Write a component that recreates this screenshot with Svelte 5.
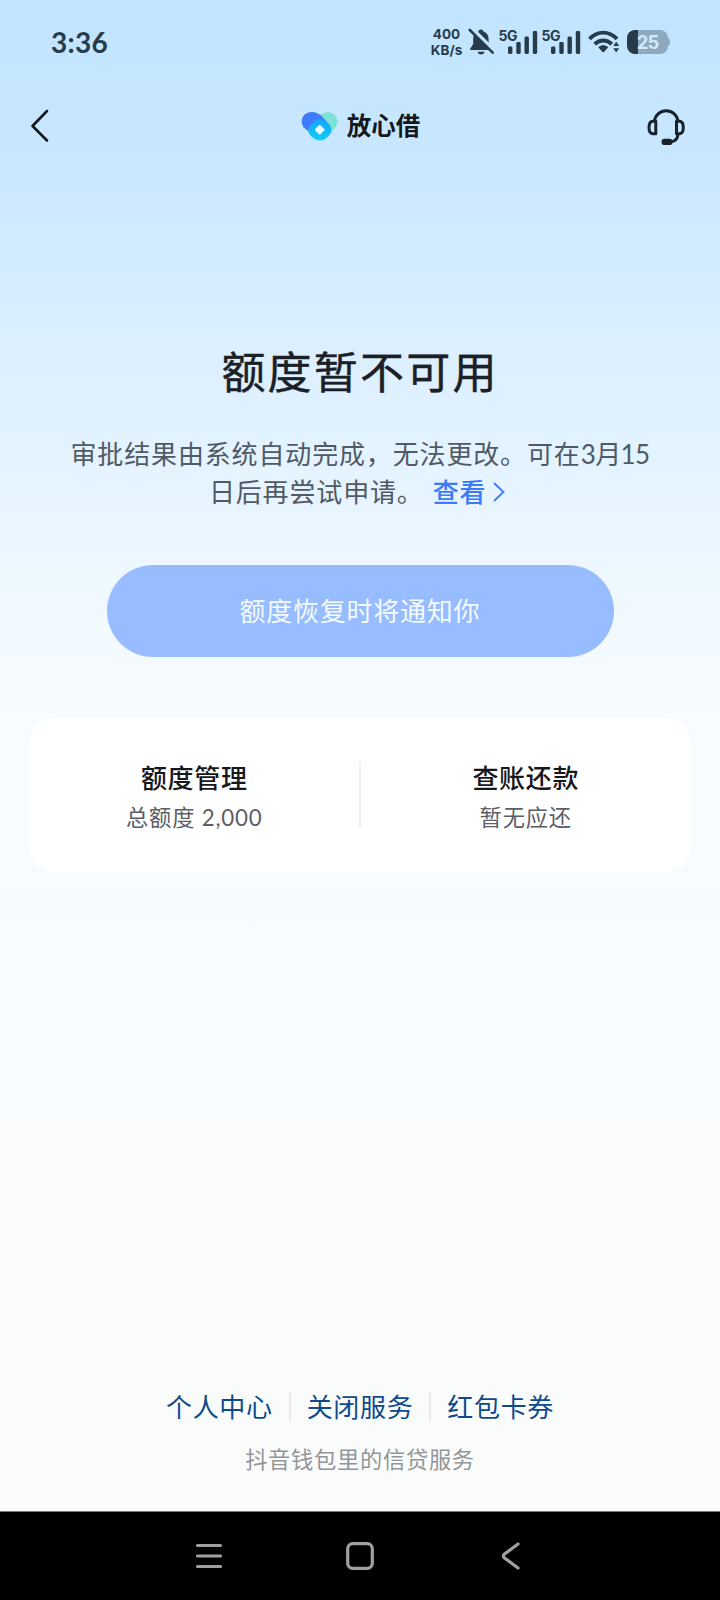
<script lang="ts">
  const bars = [
    { x: 10, h: 7.5 },
    { x: 18.3, h: 12 },
    { x: 26.5, h: 17.5 },
    { x: 34.8, h: 23 }
  ];

  const accounts = [
    { title: "额度管理", detail: "总额度 2,000" },
    { title: "查账还款", detail: "暂无应还" }
  ];

  const links = ["个人中心", "关闭服务", "红包卡券"];
</script>

{#snippet signal()}
  <svg class="signal" width="41" height="33" viewBox="0 0 41 33">
    <text x="0.5" y="14.5" font-size="14" font-weight="700" letter-spacing="-0.5">5G</text>
    {#each bars as bar}
      <rect x={bar.x} y={28 - bar.h} width="4.4" height={bar.h} rx="1.4" />
    {/each}
  </svg>
{/snippet}

<main class="screen">
  <div class="status">
    <span class="time">3:36</span>
    <div class="status-icons">
      <div class="speed">
        <span>400</span>
        <span>KB/s</span>
      </div>
      <svg class="bell" width="27" height="28" viewBox="0 0 27 28">
        <path d="M13 1.500c1.500 0 2.300.9 2.400 2 3.400 1 5.200 3.800 5.200 7.200v5.200l3 4.900v1.300H2.200v-1.300l3-4.900v-5.200c0-3.400 1.900-6.200 5.300-7.200.1-1.100 1-2 2.500-2z" />
        <path d="M9.600 23.700h7c-.5 1.700-1.700 2.700-3.500 2.700s-3-1-3.500-2.700z" />
        <path d="M2.500 -.5L26.500 23.500" stroke="#c3e5ff" stroke-width="4.500" />
        <path d="M1.800 2L24.700 24.700" stroke="#273b4a" stroke-width="2.600" stroke-linecap="round" />
      </svg>
      {@render signal()}
      {@render signal()}
      <svg class="wifi" width="32" height="26" viewBox="0 0 32 26">
        <g fill="none" stroke="#273b4a" stroke-width="3.900">
          <path d="M1.500 10C9.500 1.500 21 1.500 29 10" />
          <path d="M6.700 15.200c5-5 12.100-5 17.100 0" />
        </g>
        <path d="M10.300 18.300c3.200-2.600 6.700-2.600 9.900 0l-4 4.500c-.6.6-1.300.6-1.900 0z" />
        <path d="M25.200 17l3-4.300 3 4.300zM25.200 19.300l3 4.300 3-4.300z" />
      </svg>
      <div class="battery"><span>25</span></div>
    </div>
  </div>

  <header class="header">
    <svg class="back" width="20" height="36" viewBox="0 0 20 36">
      <path d="M17 3L2.500 18 17 32.500" fill="none" stroke="#15191d" stroke-width="2.600" stroke-linecap="round" stroke-linejoin="round" />
    </svg>
    <div class="brand">
      <svg width="37" height="31" viewBox="0 0 37 31">
        <defs>
          <linearGradient id="drop" x1="0" y1="0" x2="0" y2="1">
            <stop offset="0" stop-color="#12a5f8" />
            <stop offset="1" stop-color="#15cdf9" />
          </linearGradient>
        </defs>
        <path d="M18 5.500C22 .5 29 0 33 3.500c4.500 4 4.200 9.800.8 13.500L27 25 15 13z" fill="#7ce2d4" />
        <path d="M11 1c4 0 7 1.500 10 4.500l8 9-14 12L2.700 16.500C-2 9.500 2 1 11 1z" fill="#3e7bfa" />
        <path d="M12.500 11c4-4 9-4 13 0l2.800 3c3 3.200 2.700 7 0 10.200-5.300 6.700-12.300 6.900-18.300.8-3.500-3.500-3.500-7.500-.5-11z" fill="url(#drop)" />
        <rect x="15" y="15" width="7.400" height="7.400" rx="1" fill="#e6faff" transform="rotate(45 18.700 18.700)" />
      </svg>
      <span>放心借</span>
    </div>
    <svg class="service" width="42" height="42" viewBox="0 0 42 42">
      <g fill="none" stroke="#17222b" stroke-width="3" stroke-linejoin="round">
        <path d="M9.500 16a11.800 11.800 0 0 1 23.400 0" />
        <path d="M10.800 16.300v12.400H8c-2.600 0-4-2-4-6.200s1.400-6.200 4-6.200z" />
        <path d="M31.500 16.300v12.400h2.700c2.700 0 4.100-2 4.100-6.200s-1.400-6.200-4.100-6.200z" />
        <path d="M33 29c-.2 5-3 7.500-8 8" />
      </g>
      <rect x="16.500" y="33.800" width="11" height="6.300" rx="3.100" fill="#17222b" />
    </svg>
  </header>

  <section class="notice">
    <h1>额度暂不可用</h1>
    <p>
      审批结果由系统自动完成，无法更改。可在<span class="date">3月15</span><br />日后再尝试申请。<a href="#detail">查看<svg width="14" height="22" viewBox="0 0 14 22"><path d="M2 2l9.500 9L2 20" fill="none" stroke="#3b7bfa" stroke-width="1.800" /></svg></a>
    </p>
    <button class="notify" disabled>额度恢复时将通知你</button>
  </section>

  <section class="card">
    {#each accounts as account}
      <div class="account">
        <h2>{account.title}</h2>
        <p>{account.detail}</p>
      </div>
    {/each}
  </section>

  <footer class="footer">
    <nav class="links">
      {#each links as link}
        <a href="#link">{link}</a>
      {/each}
    </nav>
    <p>抖音钱包里的信贷服务</p>
  </footer>

  <div class="navbar">
    <svg width="30" height="30" viewBox="0 0 30 30">
      <path d="M3.500 4.500h23M3.500 15h23M3.500 25.500h23" />
    </svg>
    <svg width="30" height="30" viewBox="0 0 30 30">
      <rect x="2.700" y="2.700" width="24.600" height="24.600" rx="5" />
    </svg>
    <svg width="30" height="30" viewBox="0 0 30 30">
      <path d="M22 3L8.500 13q-2.300 2 0 4L22 27" />
    </svg>
  </div>
</main>

<style>
  :global(body) {
    margin: 0;
  }

  .screen {
    box-sizing: border-box;
    display: flex;
    flex-direction: column;
    width: 720px;
    height: 1600px;
    overflow: hidden;
    font-family: Lato, "Noto Sans CJK SC", sans-serif;
    letter-spacing: 0.67px;
    background: linear-gradient(#c1e4ff 0, #cae7ff 170px, #dbefff 340px, #e6f4ff 490px, #f0f9ff 600px, #f7fbff 700px, #f8fbfe 900px, #fafcfc 1400px, #fafcfc 100%);
  }

  h1,
  h2,
  p {
    margin: 0;
  }

  a {
    text-decoration: none;
  }

  svg {
    display: block;
    flex-shrink: 0;
  }

  .status {
    display: flex;
    justify-content: space-between;
    align-items: center;
    height: 84px;
    padding: 0 50px 0 51px;
    color: #273b4a;
    fill: #273b4a;
  }

  .time {
    font-size: 28px;
    font-weight: 700;
    letter-spacing: 0.3px;
  }

  .status-icons {
    display: flex;
    align-items: center;
    letter-spacing: 0;
    font-family: Inter, sans-serif;
  }

  .speed {
    display: flex;
    flex-direction: column;
    align-items: center;
    width: 33px;
    font-size: 13.5px;
    line-height: 16px;
    font-weight: 700;
  }

  .bell {
    margin-left: 5px;
  }

  .signal {
    margin-left: 2.5px;
  }

  .wifi {
    margin-left: 6px;
  }

  .battery {
    box-sizing: border-box;
    position: relative;
    width: 41px;
    height: 24px;
    margin: 0 2px 0 7px;
    border-radius: 8px;
    background: linear-gradient(90deg, #273b4a 11px, #8da9bd 11px);
    color: #d3e8f8;
    font-size: 18.5px;
    line-height: 24px;
    font-weight: 700;
    letter-spacing: -1px;
    text-align: center;
  }

  .battery::after {
    content: "";
    position: absolute;
    right: -2px;
    top: 8px;
    width: 3px;
    height: 8px;
    border-radius: 0 3px 3px 0;
    background: #8da9bd;
  }

  .header {
    display: grid;
    grid-template-columns: 1fr auto 1fr;
    align-items: center;
    height: 84px;
    padding: 0 31px 0 30px;
  }

  .brand {
    display: flex;
    align-items: center;
    gap: 9px;
    padding-left: 2px;
    color: #15191d;
    font-size: 24.5px;
    line-height: 32px;
    font-weight: 700;
    letter-spacing: 0;
  }

  .service {
    justify-self: end;
    margin-right: 2px;
  }

  .notice {
    display: flex;
    flex-direction: column;
    align-items: center;
    padding-top: 171px;
  }

  h1 {
    color: #1a2026;
    font-size: 44px;
    line-height: 66px;
    font-weight: 400;
    letter-spacing: 2.2px;
    -webkit-text-stroke: 0.4px #1a2026;
  }

  .notice p {
    margin-top: 30px;
    color: #4f5a65;
    font-size: 26px;
    line-height: 38px;
    letter-spacing: 0.85px;
    text-align: center;
  }

  .date {
    letter-spacing: -0.6px;
  }

  .notice a {
    margin: 0 5px 0 9px;
    color: #3b7bfa;
    font-weight: 500;
    letter-spacing: 0.67px;
  }

  .notice a svg {
    display: inline-block;
    margin-left: 6px;
    vertical-align: -1px;
  }

  .notify {
    width: 507px;
    height: 92px;
    margin-top: 54px;
    padding: 0 0 4px;
    border: none;
    border-radius: 46px;
    background: #97bcff;
    color: #f3fbff;
    font-family: inherit;
    font-size: 26px;
    font-weight: 400;
    letter-spacing: 0.75px;
  }

  .card {
    display: flex;
    align-items: center;
    height: 154px;
    margin: 61px 29px 0;
    border-radius: 26px;
    background: #fff;
  }

  .account {
    flex: 1;
    height: 66px;
    text-align: center;
  }

  .account + .account {
    border-left: 2px solid #efeff0;
    margin-left: -1px;
  }

  h2 {
    margin-top: -4px;
    color: #16181c;
    font-size: 26px;
    line-height: 40px;
    font-weight: 500;
  }

  .account p {
    color: #5c5e66;
    font-size: 22.3px;
    line-height: 40px;
    letter-spacing: 0.8px;
  }

  .footer {
    display: flex;
    flex-direction: column;
    align-items: center;
    margin-top: auto;
    padding-bottom: 34px;
  }

  .links {
    display: flex;
    align-items: center;
  }

  .links a {
    padding: 0 16px;
    color: #0f4a8c;
    font-size: 26px;
    line-height: 30px;
  }

  .links a + a {
    border-left: 2px solid #e9ecee;
  }

  .footer p {
    margin-top: 21px;
    color: #929599;
    font-size: 22.3px;
    line-height: 34px;
  }

  .navbar {
    display: flex;
    justify-content: center;
    align-items: center;
    gap: 121px;
    height: 88px;
    border-top: 1px solid #777;
    background: #000;
  }

  .navbar svg {
    fill: none;
    stroke: #a0a0a0;
    stroke-width: 3.2;
    stroke-linecap: round;
  }
</style>
